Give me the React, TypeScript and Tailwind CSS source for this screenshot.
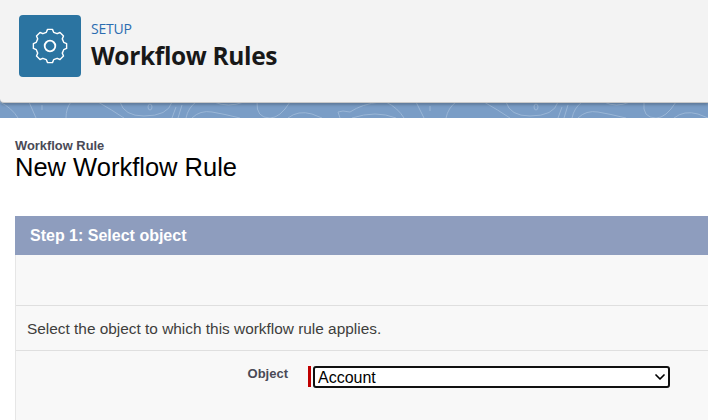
import { ChevronDown } from "lucide-react"

const arial = { fontFamily: '"Liberation Sans", Arial, sans-serif' }

// outline of the setup cog, eight blunt teeth
function gearPath() {
  const cx = 18
  const cy = 18
  const pts: string[] = []
  for (let i = 0; i < 8; i++) {
    const a = (i * 45 * Math.PI) / 180 - Math.PI / 2
    const step = (Math.PI / 180) * 13
    const inner = 14.2
    const outer = 16.8
    const corners: [number, number][] = [
      [inner, a - step * 1.15],
      [outer, a - step * 0.65],
      [outer, a + step * 0.65],
      [inner, a + step * 1.15],
    ]
    for (const [r, t] of corners) {
      pts.push(`${(cx + r * Math.cos(t)).toFixed(2)} ${(cy + r * Math.sin(t)).toFixed(2)}`)
    }
  }
  return `M${pts.join(" L")} Z`
}

function GearIcon() {
  return (
    <svg width="36" height="36" viewBox="0 0 36 36" fill="none" stroke="#ffffff" strokeWidth="1.4" strokeLinejoin="round">
      <path d={gearPath()} />
      <circle cx="18" cy="18" r="5.3" strokeWidth="1.8" />
    </svg>
  )
}

function BandPattern() {
  return (
    <svg className="absolute inset-x-0 top-[102px] h-[16px] w-full opacity-70" viewBox="0 0 708 16" preserveAspectRatio="none" fill="none" stroke="#a9c2de" strokeWidth="1">
      <path d="M0 0 Q12 6 18 16" />
      <path d="M29 0 L36 16" />
      <path d="M42 3 L42 8" />
      <path d="M71 0 Q66 6 66 16" />
      <path d="M98 0 Q112 8 124 16" />
      <path d="M120 0 Q124 14 144 14 Q168 14 172 0" />
      <ellipse cx="150" cy="5" rx="2" ry="3" />
      <path d="M176 5 L172 16 M182 3 L178 16" />
      <path d="M196 0 Q188 6 186 16" />
      <path d="M192 16 Q200 8 212 10 Q224 12 240 16" />
      <path d="M214 0 Q228 6 244 0" />
      <path d="M257 0 Q256 16 270 16 Q280 16 290 0" />
      <path d="M288 16 Q298 8 312 12 L322 16" />
      <path d="M340 16 L338 10 Q342 8 350 10 Q362 2 380 0" />
      <path d="M352 16 Q376 8 396 16 M386 0 Q398 6 404 16" />
      <path d="M416 0 L424 16 M430 4 L430 9" />
      <path d="M456 0 Q448 6 446 16" />
      <path d="M484 0 Q498 8 510 16" />
      <path d="M506 0 Q510 14 530 14 Q554 14 558 0" />
      <ellipse cx="536" cy="5" rx="2" ry="3" />
      <path d="M562 5 L558 16 M568 3 L564 16" />
      <path d="M582 0 Q574 6 572 16" />
      <path d="M578 16 Q586 8 598 10 Q610 12 626 16" />
      <path d="M604 0 Q616 6 630 0" />
      <path d="M644 0 Q642 16 656 16 Q666 16 676 0" />
      <path d="M674 16 Q684 8 698 12 L708 16" />
    </svg>
  )
}

export default function App() {
  return (
    <div className="flex h-[420px] w-[708px] flex-col overflow-hidden bg-white" style={arial}>
      {/* Setup banner */}
      <div className="relative h-[118px] shrink-0 bg-[#7a9dc6]">
        <BandPattern />
        <header className="relative flex h-[103px] items-start gap-[10px] rounded-bl-[4px] border-b border-[#c9c9c9] bg-[#f3f3f3] pl-[19px] pt-[15px] shadow-[0_2px_3px_rgba(0,0,0,0.22)]">
          <div className="flex h-[62px] w-[62px] items-center justify-center rounded-[4px] bg-[#2b74a1]">
            <GearIcon />
          </div>
          <div className="pt-[4px]" style={{ fontFamily: '"Open Sans", "Noto Sans", sans-serif' }}>
            <div className="text-[14px] leading-[20px] tracking-[-0.2px] text-[#2a6cb0]">SETUP</div>
            <h1 className="mt-[1px] text-[24.5px] leading-[32px] font-bold tracking-[-0.35px] text-[#181818]">Workflow Rules</h1>
          </div>
        </header>
      </div>

      {/* Page title */}
      <div className="pl-[15px] pt-[21px]">
        <div className="text-[12.9px] leading-[14px] font-bold text-[#4a4a56]">Workflow Rule</div>
        <div className="-mt-[1px] text-[25.5px] leading-[30px] text-black">New Workflow Rule</div>
      </div>

      {/* Step panel */}
      <section className="ml-[15px] mt-[34px] flex-1 border-l border-[#e6e6e6] bg-[#f8f8f8]">
        <div className="-ml-px flex h-[39px] items-center bg-[#8e9dbe] pl-[15px] text-[16px] font-bold text-white">
          Step 1: Select object
        </div>
        <div className="h-[50px]" />
        <div className="flex h-[46px] items-center border-y border-[#dfdfdf] pl-[11px] pt-[1px] text-[15.4px] text-[#3e3e3c]">
          Select the object to which this workflow rule applies.
        </div>
        <div className="flex items-start pt-[15px]">
          <label className="w-[272px] text-right text-[13px] leading-[16px] font-bold text-[#4a4a56]">Object</label>
          <div className="ml-[20px] h-[21px] w-[3px] self-start bg-[#c00000]" />
          <div className="relative ml-[2px]">
            <select
              defaultValue="Account"
              className="block h-[22px] w-[357px] appearance-none rounded-[3px] border-2 border-[#111111] bg-white pl-[3px] pt-[1px] text-[16px] leading-[18px] text-black"
              style={arial}
            >
              <option>Account</option>
            </select>
            <ChevronDown className="pointer-events-none absolute right-[2px] top-[3px] h-[16px] w-[16px] text-black" strokeWidth={2.6} />
          </div>
        </div>
      </section>
    </div>
  )
}
